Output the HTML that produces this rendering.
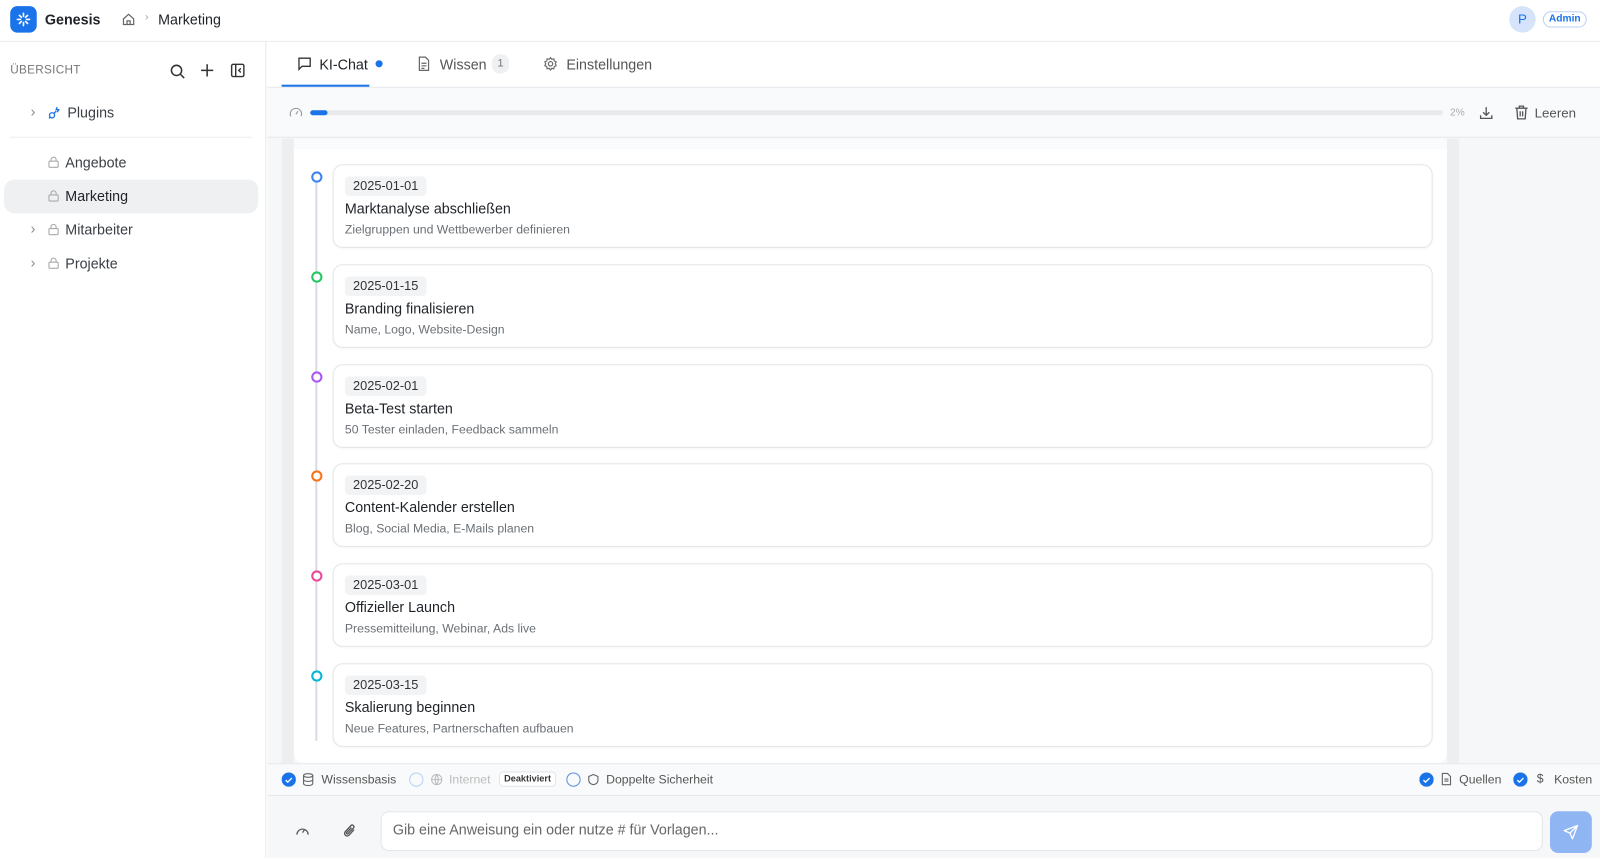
<!DOCTYPE html>
<html><head><meta charset="utf-8"><style>
*{box-sizing:border-box;margin:0;padding:0}
body{width:1600px;height:855px;overflow:hidden;font-family:"Liberation Sans",sans-serif;background:#fff;color:#1f2328;position:relative}
#w{position:absolute;left:0;top:0;width:1568px;height:838px;transform:scale(1.0204);transform-origin:0 0}
.abs{position:absolute}
svg{display:block}
.hdr{left:0;top:0;width:1568px;height:41px;border-bottom:1px solid #e6e8eb;background:#fff}
.side{left:0;top:41px;width:261px;height:800px;border-right:1px solid #e6e8eb;background:#fff}
.main{left:262px;top:41px;width:1306px;height:800px;background:#f6f7f9}
.card{position:absolute;left:326px;width:1078px;height:82px;background:#fff;border:1px solid #e3e6e9;border-radius:10px;box-shadow:0 1px 2px rgba(0,0,0,.04)}
.date{position:absolute;left:11px;top:11px;background:#f1f3f5;border-radius:4px;font-size:12.5px;color:#333;padding:2px 8px;height:19px;line-height:15px}
.ttl{position:absolute;left:11px;top:34px;font-size:14px;color:#1f2328}
.sub{position:absolute;left:11px;top:56px;font-size:12px;color:#6b7075}
.dot{position:absolute;left:305px;width:11px;height:11px;border-radius:50%;border:2.8px solid;background:#fff}
.si{position:absolute;font-size:14px;color:#3a3f45}
</style></head><body><div id="w">
<div class="abs hdr">
 <div class="abs" style="left:10px;top:6px;width:26px;height:26px;border-radius:7px;background:#1a73e8">
  <svg width="26" height="26" viewBox="0 0 26 26" stroke="#fff" stroke-width="1.6" stroke-linecap="round"><path d="M13 7v3M13 16v3M7 13h3M16 13h3M9 9l2 2M15 15l2 2M17 9l-2 2M9 17l2-2"/></svg>
 </div>
 <div class="abs" style="left:44px;top:11px;font-size:14px;font-weight:bold">Genesis</div>
 <svg class="abs" style="left:119px;top:12px" width="14" height="14" viewBox="0 0 14 14" fill="none" stroke="#666" stroke-width="1.2"><path d="M2 6.5L7 2l5 4.5V12H2z M5.5 12V8.5h3V12"/></svg>
 <div class="abs" style="left:142px;top:11px;font-size:11px;color:#aaa">›</div>
 <div class="abs" style="left:155px;top:11px;font-size:14px">Marketing</div>
 <div class="abs" style="left:1479px;top:6px;width:26px;height:26px;border-radius:50%;background:#d6e4fb;color:#1a73e8;font-size:13px;text-align:center;line-height:26px">P</div>
 <div class="abs" style="left:1512px;top:11px;width:43px;height:16px;border:1px solid #b9d0f5;border-radius:8px;color:#1a73e8;font-size:10px;font-weight:bold;text-align:center;line-height:14px">Admin</div>
</div>
<div class="abs side">
 <div class="abs" style="left:10px;top:22px;font-size:11.5px;color:#777;letter-spacing:.3px">ÜBERSICHT</div>
 <svg class="abs" style="left:166px;top:21px" width="16" height="16" viewBox="0 0 16 16" fill="none" stroke="#333" stroke-width="1.5"><circle cx="7" cy="7" r="5"/><path d="M11 11l3.5 3.5"/></svg>
 <svg class="abs" style="left:196px;top:21px" width="14" height="14" viewBox="0 0 14 14" stroke="#333" stroke-width="1.5"><path d="M7 1v12M1 7h12"/></svg>
 <svg class="abs" style="left:225px;top:20px" width="16" height="16" viewBox="0 0 16 16" fill="none" stroke="#333" stroke-width="1.4"><rect x="2" y="2" width="12" height="12" rx="1.5"/><path d="M6 2v12M11 6l-2 2 2 2"/></svg>
 <div class="si" style="left:30px;top:60px;color:#888">›</div>
 <svg class="abs" style="left:46px;top:63px" width="14" height="14" viewBox="0 0 14 14" fill="none" stroke="#1a73e8" stroke-width="1.3"><circle cx="5" cy="9" r="2.5"/><path d="M2 12l1.5-1.5M7 7l2-2M10 1l-1 2.5h2.5L10 6"/></svg>
 <div class="si" style="left:66px;top:61px">Plugins</div>
 <div class="abs" style="left:10px;top:93px;width:237px;height:1px;background:#eceef0"></div>
 <div class="abs" style="left:4px;top:135px;width:249px;height:33px;border-radius:10px;background:#eef0f2"></div>
 <svg class="abs" style="left:47px;top:112px" width="11" height="12" viewBox="0 0 11 12" fill="none" stroke="#aaa" stroke-width="1.1"><rect x="1" y="5" width="9" height="6" rx="1"/><path d="M3 5V3.5a2.5 2.5 0 015 0V5"/></svg>
 <div class="si" style="left:64px;top:110px">Angebote</div>
 <svg class="abs" style="left:47px;top:145px" width="11" height="12" viewBox="0 0 11 12" fill="none" stroke="#aaa" stroke-width="1.1"><rect x="1" y="5" width="9" height="6" rx="1"/><path d="M3 5V3.5a2.5 2.5 0 015 0V5"/></svg>
 <div class="si" style="left:64px;top:143px;color:#1f2328">Marketing</div>
 <div class="si" style="left:30px;top:175px;color:#888">›</div>
 <svg class="abs" style="left:47px;top:178px" width="11" height="12" viewBox="0 0 11 12" fill="none" stroke="#aaa" stroke-width="1.1"><rect x="1" y="5" width="9" height="6" rx="1"/><path d="M3 5V3.5a2.5 2.5 0 015 0V5"/></svg>
 <div class="si" style="left:64px;top:176px">Mitarbeiter</div>
 <div class="si" style="left:30px;top:208px;color:#888">›</div>
 <svg class="abs" style="left:47px;top:211px" width="11" height="12" viewBox="0 0 11 12" fill="none" stroke="#aaa" stroke-width="1.1"><rect x="1" y="5" width="9" height="6" rx="1"/><path d="M3 5V3.5a2.5 2.5 0 015 0V5"/></svg>
 <div class="si" style="left:64px;top:209px">Projekte</div>
</div>
<div class="abs main">
 <div class="abs" style="left:0;top:0;width:1306px;height:45px;background:#fff;border-bottom:1px solid #e6e8eb"></div>
 <svg class="abs" style="left:29px;top:14px" width="15" height="15" viewBox="0 0 15 15" fill="none" stroke="#333" stroke-width="1.3"><path d="M2 2h11v8H5l-3 3z"/></svg>
 <div class="abs" style="left:51px;top:14px;font-size:14px;color:#1f2328">KI-Chat</div>
 <div class="abs" style="left:106px;top:18px;width:7px;height:7px;border-radius:50%;background:#1a73e8"></div>
 <div class="abs" style="left:14px;top:42px;width:86px;height:2px;background:#1a73e8"></div>
 <svg class="abs" style="left:147px;top:14px" width="13" height="15" viewBox="0 0 13 15" fill="none" stroke="#666" stroke-width="1.2"><path d="M2 1h6l3 3v10H2z M4 7h5M4 9.5h5M4 12h3"/></svg>
 <div class="abs" style="left:169px;top:14px;font-size:14px;color:#555">Wissen</div>
 <div class="abs" style="left:220px;top:12px;width:17px;height:19px;border-radius:8px;background:#eef0f2;font-size:11px;color:#777;text-align:center;line-height:19px">1</div>
 <svg class="abs" style="left:270px;top:14px" width="15" height="15" viewBox="0 0 16 16" fill="none" stroke="#666" stroke-width="1.2"><circle cx="8" cy="8" r="2.3"/><path d="M8 1.5l1.3 1.8 2.2-.5.4 2.2 2 1-.9 2 .9 2-2 1-.4 2.2-2.2-.5L8 14.5l-1.3-1.8-2.2.5-.4-2.2-2-1 .9-2-.9-2 2-1 .4-2.2 2.2.5z"/></svg>
 <div class="abs" style="left:293px;top:14px;font-size:14px;color:#555">Einstellungen</div>
 <div class="abs" style="left:0;top:46px;width:1306px;height:48px;background:#f9fafb;border-bottom:1px solid #e6e8eb"></div>
 <svg class="abs" style="left:21px;top:63px" width="14" height="12" viewBox="0 0 14 12" fill="none" stroke="#999" stroke-width="1.1"><path d="M2 10a5.5 5.5 0 1110 0M7 8l2-3"/></svg>
 <div class="abs" style="left:42px;top:67px;width:1110px;height:5px;border-radius:3px;background:#e8eaed"></div>
 <div class="abs" style="left:42px;top:67px;width:17px;height:5px;border-radius:3px;background:#1a73e8"></div>
 <div class="abs" style="left:1159px;top:64px;font-size:10px;color:#aaa">2%</div>
 <svg class="abs" style="left:1187px;top:62px" width="15" height="15" viewBox="0 0 15 15" fill="none" stroke="#555" stroke-width="1.3"><path d="M7.5 2v8M4.5 7l3 3 3-3M2 10v3h11v-3"/></svg>
 <svg class="abs" style="left:1222px;top:61px" width="14" height="16" viewBox="0 0 14 16" fill="none" stroke="#555" stroke-width="1.3"><path d="M1 4h12M5 4V2h4v2M2.5 4l.8 10.5h7.4L11.5 4M5.8 7v5M8.2 7v5"/></svg>
 <div class="abs" style="left:1242px;top:62px;font-size:13px;color:#555">Leeren</div>
 <div class="abs" style="left:14px;top:95px;width:12px;height:612px;background:#eceef0"></div>
 <div class="abs" style="left:1156px;top:95px;width:12px;height:612px;background:#eceef0"></div>
 <div class="abs" style="left:26px;top:95px;width:1130px;height:612px;background:#fff;border-radius:0 0 10px 10px;border-top:10px solid #fafbfc"></div>
 <div class="abs" style="left:47px;top:135px;width:2px;height:550px;background:#d7dce4"></div>
 <div class="abs" style="left:0;top:707px;width:1306px;height:32px;background:#f9fafb;border-top:1px solid #e6e8eb;border-bottom:1px solid #e6e8eb"></div>
 <svg class="abs" style="left:14px;top:716px" width="14" height="14"><circle cx="7" cy="7" r="7" fill="#1a73e8"/><path d="M4 7.5l2 2 4-4" stroke="#fff" stroke-width="1.3" fill="none"/></svg>
 <svg class="abs" style="left:34px;top:716px" width="12" height="14" viewBox="0 0 12 14" fill="none" stroke="#666" stroke-width="1.1"><ellipse cx="6" cy="3" rx="4.5" ry="1.8"/><path d="M1.5 3v8c0 1 2 1.8 4.5 1.8s4.5-.8 4.5-1.8V3M1.5 7c0 1 2 1.8 4.5 1.8s4.5-.8 4.5-1.8"/></svg>
 <div class="abs" style="left:53px;top:716px;font-size:12px;color:#555">Wissensbasis</div>
 <div class="abs" style="left:139px;top:716px;width:14px;height:14px;border-radius:50%;border:1.3px solid #b9d0f5"></div>
 <svg class="abs" style="left:160px;top:717px" width="12" height="12" viewBox="0 0 12 12" fill="none" stroke="#bbb" stroke-width="1"><circle cx="6" cy="6" r="5"/><path d="M1 6h10M6 1c-2 3-2 7 0 10M6 1c2 3 2 7 0 10"/></svg>
 <div class="abs" style="left:178px;top:716px;font-size:12px;color:#bbb">Internet</div>
 <div class="abs" style="left:227px;top:715px;height:15px;padding:0 4px;border:1px solid #e3e5e8;border-radius:4px;font-size:9px;font-weight:bold;color:#333;line-height:13px;background:#fff">Deaktiviert</div>
 <div class="abs" style="left:293px;top:716px;width:14px;height:14px;border-radius:50%;border:1.3px solid #5b8fd9"></div>
 <svg class="abs" style="left:314px;top:717px" width="11" height="12" viewBox="0 0 11 12" fill="none" stroke="#666" stroke-width="1.1"><path d="M5.5 1L10 3v3.5c0 2.5-2 4-4.5 4.5C3 10.5 1 9 1 6.5V3z"/></svg>
 <div class="abs" style="left:332px;top:716px;font-size:12px;color:#555">Doppelte Sicherheit</div>
 <svg class="abs" style="left:1129px;top:716px" width="14" height="14"><circle cx="7" cy="7" r="7" fill="#1a73e8"/><path d="M4 7.5l2 2 4-4" stroke="#fff" stroke-width="1.3" fill="none"/></svg>
 <svg class="abs" style="left:1150px;top:716px" width="11" height="13" viewBox="0 0 11 13" fill="none" stroke="#666" stroke-width="1.1"><path d="M1.5 1h5l3 3v8h-8z M3.5 6.5h4M3.5 8.5h4"/></svg>
 <div class="abs" style="left:1168px;top:716px;font-size:12px;color:#555">Quellen</div>
 <svg class="abs" style="left:1221px;top:716px" width="14" height="14"><circle cx="7" cy="7" r="7" fill="#1a73e8"/><path d="M4 7.5l2 2 4-4" stroke="#fff" stroke-width="1.3" fill="none"/></svg>
 <div class="abs" style="left:1244px;top:715px;font-size:12px;color:#555">$</div>
 <div class="abs" style="left:1261px;top:716px;font-size:12px;color:#555">Kosten</div>
 <svg class="abs" style="left:27px;top:767px" width="15" height="12" viewBox="0 0 15 12" fill="none" stroke="#555" stroke-width="1.2"><path d="M2 10a5.5 5.5 0 1111 0M7.5 8l2-3"/></svg>
 <svg class="abs" style="left:74px;top:765px" width="14" height="16" viewBox="0 0 14 16" fill="none" stroke="#555" stroke-width="1.3"><path d="M11 7l-5 5.5a2.5 2.5 0 01-3.6-3.5L8 3a1.7 1.7 0 012.4 2.4L5 11a.8.8 0 01-1.2-1.2L8.5 5"/></svg>
 <div class="abs" style="left:111px;top:754px;width:1139px;height:39px;background:#fff;border:1px solid #e3e5e8;border-radius:8px"></div>
 <div class="abs" style="left:123px;top:764px;font-size:14px;color:#666">Gib eine Anweisung ein oder nutze # für Vorlagen...</div>
 <div class="abs" style="left:1257px;top:754px;width:41px;height:41px;border-radius:8px;background:#8fb6f3"></div>
 <svg class="abs" style="left:1270px;top:767px" width="15" height="15" viewBox="0 0 15 15" fill="none" stroke="#fff" stroke-width="1.3" stroke-linejoin="round"><path d="M14 1L1 6l5.5 2.5L9 14z M6.5 8.5L14 1"/></svg>
</div>
<div class="dot" style="top:168px;border-color:#3b82f6"></div>
<div class="card" style="top:161px"><div class="date">2025-01-01</div><div class="ttl">Marktanalyse abschließen</div><div class="sub">Zielgruppen und Wettbewerber definieren</div></div>
<div class="dot" style="top:266px;border-color:#22c55e"></div>
<div class="card" style="top:259px"><div class="date">2025-01-15</div><div class="ttl">Branding finalisieren</div><div class="sub">Name, Logo, Website-Design</div></div>
<div class="dot" style="top:364px;border-color:#a855f7"></div>
<div class="card" style="top:357px"><div class="date">2025-02-01</div><div class="ttl">Beta-Test starten</div><div class="sub">50 Tester einladen, Feedback sammeln</div></div>
<div class="dot" style="top:461px;border-color:#f97316"></div>
<div class="card" style="top:454px"><div class="date">2025-02-20</div><div class="ttl">Content-Kalender erstellen</div><div class="sub">Blog, Social Media, E-Mails planen</div></div>
<div class="dot" style="top:559px;border-color:#ec4899"></div>
<div class="card" style="top:552px"><div class="date">2025-03-01</div><div class="ttl">Offizieller Launch</div><div class="sub">Pressemitteilung, Webinar, Ads live</div></div>
<div class="dot" style="top:657px;border-color:#06b6d4"></div>
<div class="card" style="top:650px"><div class="date">2025-03-15</div><div class="ttl">Skalierung beginnen</div><div class="sub">Neue Features, Partnerschaften aufbauen</div></div>
</div></body></html>
